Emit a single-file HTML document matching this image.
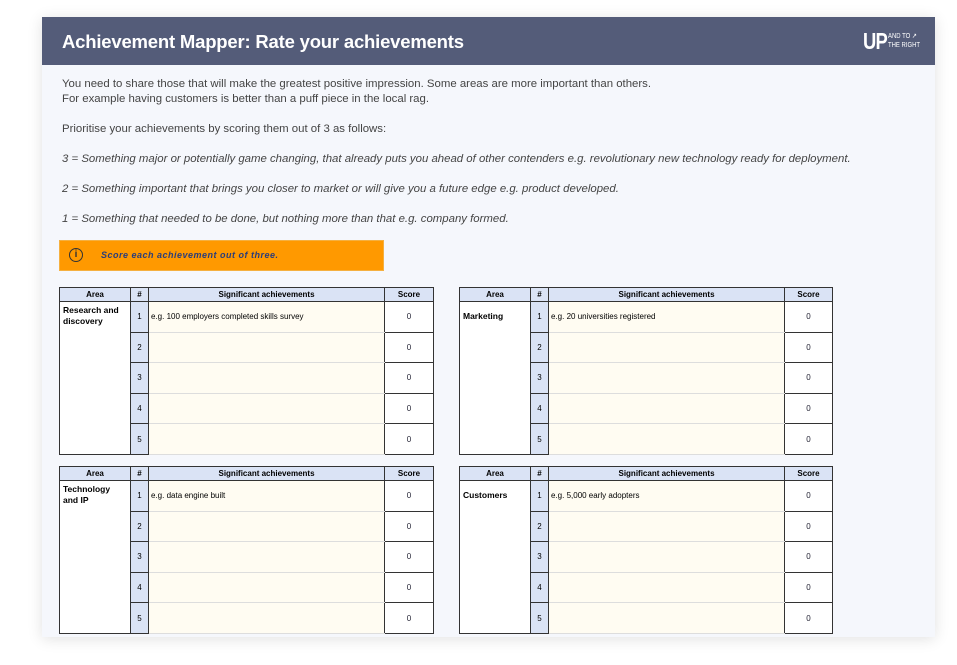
<!DOCTYPE html>
<html><head><style>
body{margin:0;width:957px;height:665px;background:#fff;position:relative;overflow:hidden;font-family:"Liberation Sans",Arial,sans-serif}
.card{position:absolute;left:42px;top:17px;width:893px;height:620px;background:#f5f7fc;box-shadow:0 2px 14px rgba(0,0,0,.12)}
.hdr{position:absolute;left:0;top:0;width:893px;height:48px;background:#545c79;color:#fff}
.hdr h1{margin:0;position:absolute;left:20px;top:14px;font-size:18.5px;font-weight:bold;letter-spacing:-.2px}
.logo{position:absolute;left:821px;top:11px;width:60px;height:26px}
.logo b{position:absolute;left:0;top:0;font-size:23px;font-weight:bold;letter-spacing:-1px;transform:scaleX(.8);transform-origin:left}
.logo span{position:absolute;left:25px;top:4px;font-size:7px;line-height:9px;white-space:nowrap;transform:scaleX(.85);transform-origin:left}
.t{position:absolute;left:20px;font-size:11.4px;color:#444}
.i{font-style:italic}
.warn{position:absolute;left:17px;top:223px;width:325px;height:31px;background:#ff9900;border:1px solid #f5b040;box-sizing:border-box}
.warn .c{position:absolute;left:9px;top:7px;width:12px;height:12px;border:1.5px solid #333;border-radius:50%;font-size:10px;text-align:center;line-height:12px;font-weight:bold;color:#333}
.warn .m{position:absolute;left:41px;top:9px;font-size:9px;font-style:italic;font-weight:bold;color:#2a3d7a;letter-spacing:.5px}
table{position:absolute;border-collapse:collapse;font-size:8px;table-layout:fixed}
td,th{border:1px solid #333;padding:0}
th{background:#dae3f5;height:13px;font-size:8px}
td.a{background:#fff;vertical-align:top;font-weight:bold;padding:3px 3px;font-size:8.5px;line-height:11px}
td.n{background:#dae3f5;text-align:center;height:29.6px}
td.s{background:#fffcf2;padding-left:2px;border-color:#ddd #333}
td.sc{background:#fff;text-align:center;color:#223}
</style></head><body>
<div class="card">
<div class="hdr"><h1>Achievement Mapper: Rate your achievements</h1>
<div class="logo"><b>UP</b><span>AND TO ↗<br>THE RIGHT</span></div></div>
<div class="t" style="top:61px">You need to share those that will make the greatest positive impression. Some areas are more important than others.</div>
<div class="t" style="top:76px">For example having customers is better than a puff piece in the local rag.</div>
<div class="t" style="top:106px">Prioritise your achievements by scoring them out of 3 as follows:</div>
<div class="t i" style="top:136px">3 = Something major or potentially game changing, that already puts you ahead of other contenders e.g. revolutionary new technology ready for deployment.</div>
<div class="t i" style="top:166px">2 = Something important that brings you closer to market or will give you a future edge e.g. product developed.</div>
<div class="t i" style="top:196px">1 = Something that needed to be done, but nothing more than that e.g. company formed.</div>
<div class="warn"><div class="c">i</div><div class="m">Score each achievement out of three.</div></div>
</div>
<table style="left:59px;top:287px;width:374px"><colgroup><col style="width:71px"><col style="width:18px"><col style="width:236px"><col style="width:49px"></colgroup>
<tr><th>Area</th><th>#</th><th>Significant achievements</th><th>Score</th></tr>
<tr><td class="a" rowspan="5">Research and discovery</td><td class="n">1</td><td class="s">e.g. 100 employers completed skills survey</td><td class="sc">0</td></tr>
<tr><td class="n">2</td><td class="s"></td><td class="sc">0</td></tr><tr><td class="n">3</td><td class="s"></td><td class="sc">0</td></tr><tr><td class="n">4</td><td class="s"></td><td class="sc">0</td></tr><tr><td class="n">5</td><td class="s"></td><td class="sc">0</td></tr></table>
<table style="left:459px;top:287px;width:373px"><colgroup><col style="width:71px"><col style="width:18px"><col style="width:236px"><col style="width:48px"></colgroup>
<tr><th>Area</th><th>#</th><th>Significant achievements</th><th>Score</th></tr>
<tr><td class="a" rowspan="5" style="padding-top:9px">Marketing</td><td class="n">1</td><td class="s">e.g. 20 universities registered</td><td class="sc">0</td></tr>
<tr><td class="n">2</td><td class="s"></td><td class="sc">0</td></tr><tr><td class="n">3</td><td class="s"></td><td class="sc">0</td></tr><tr><td class="n">4</td><td class="s"></td><td class="sc">0</td></tr><tr><td class="n">5</td><td class="s"></td><td class="sc">0</td></tr></table>
<table style="left:59px;top:466px;width:374px"><colgroup><col style="width:71px"><col style="width:18px"><col style="width:236px"><col style="width:49px"></colgroup>
<tr><th>Area</th><th>#</th><th>Significant achievements</th><th>Score</th></tr>
<tr><td class="a" rowspan="5">Technology and IP</td><td class="n">1</td><td class="s">e.g. data engine built</td><td class="sc">0</td></tr>
<tr><td class="n">2</td><td class="s"></td><td class="sc">0</td></tr><tr><td class="n">3</td><td class="s"></td><td class="sc">0</td></tr><tr><td class="n">4</td><td class="s"></td><td class="sc">0</td></tr><tr><td class="n">5</td><td class="s"></td><td class="sc">0</td></tr></table>
<table style="left:459px;top:466px;width:373px"><colgroup><col style="width:71px"><col style="width:18px"><col style="width:236px"><col style="width:48px"></colgroup>
<tr><th>Area</th><th>#</th><th>Significant achievements</th><th>Score</th></tr>
<tr><td class="a" rowspan="5" style="padding-top:9px">Customers</td><td class="n">1</td><td class="s">e.g. 5,000 early adopters</td><td class="sc">0</td></tr>
<tr><td class="n">2</td><td class="s"></td><td class="sc">0</td></tr><tr><td class="n">3</td><td class="s"></td><td class="sc">0</td></tr><tr><td class="n">4</td><td class="s"></td><td class="sc">0</td></tr><tr><td class="n">5</td><td class="s"></td><td class="sc">0</td></tr></table>
</body></html>
